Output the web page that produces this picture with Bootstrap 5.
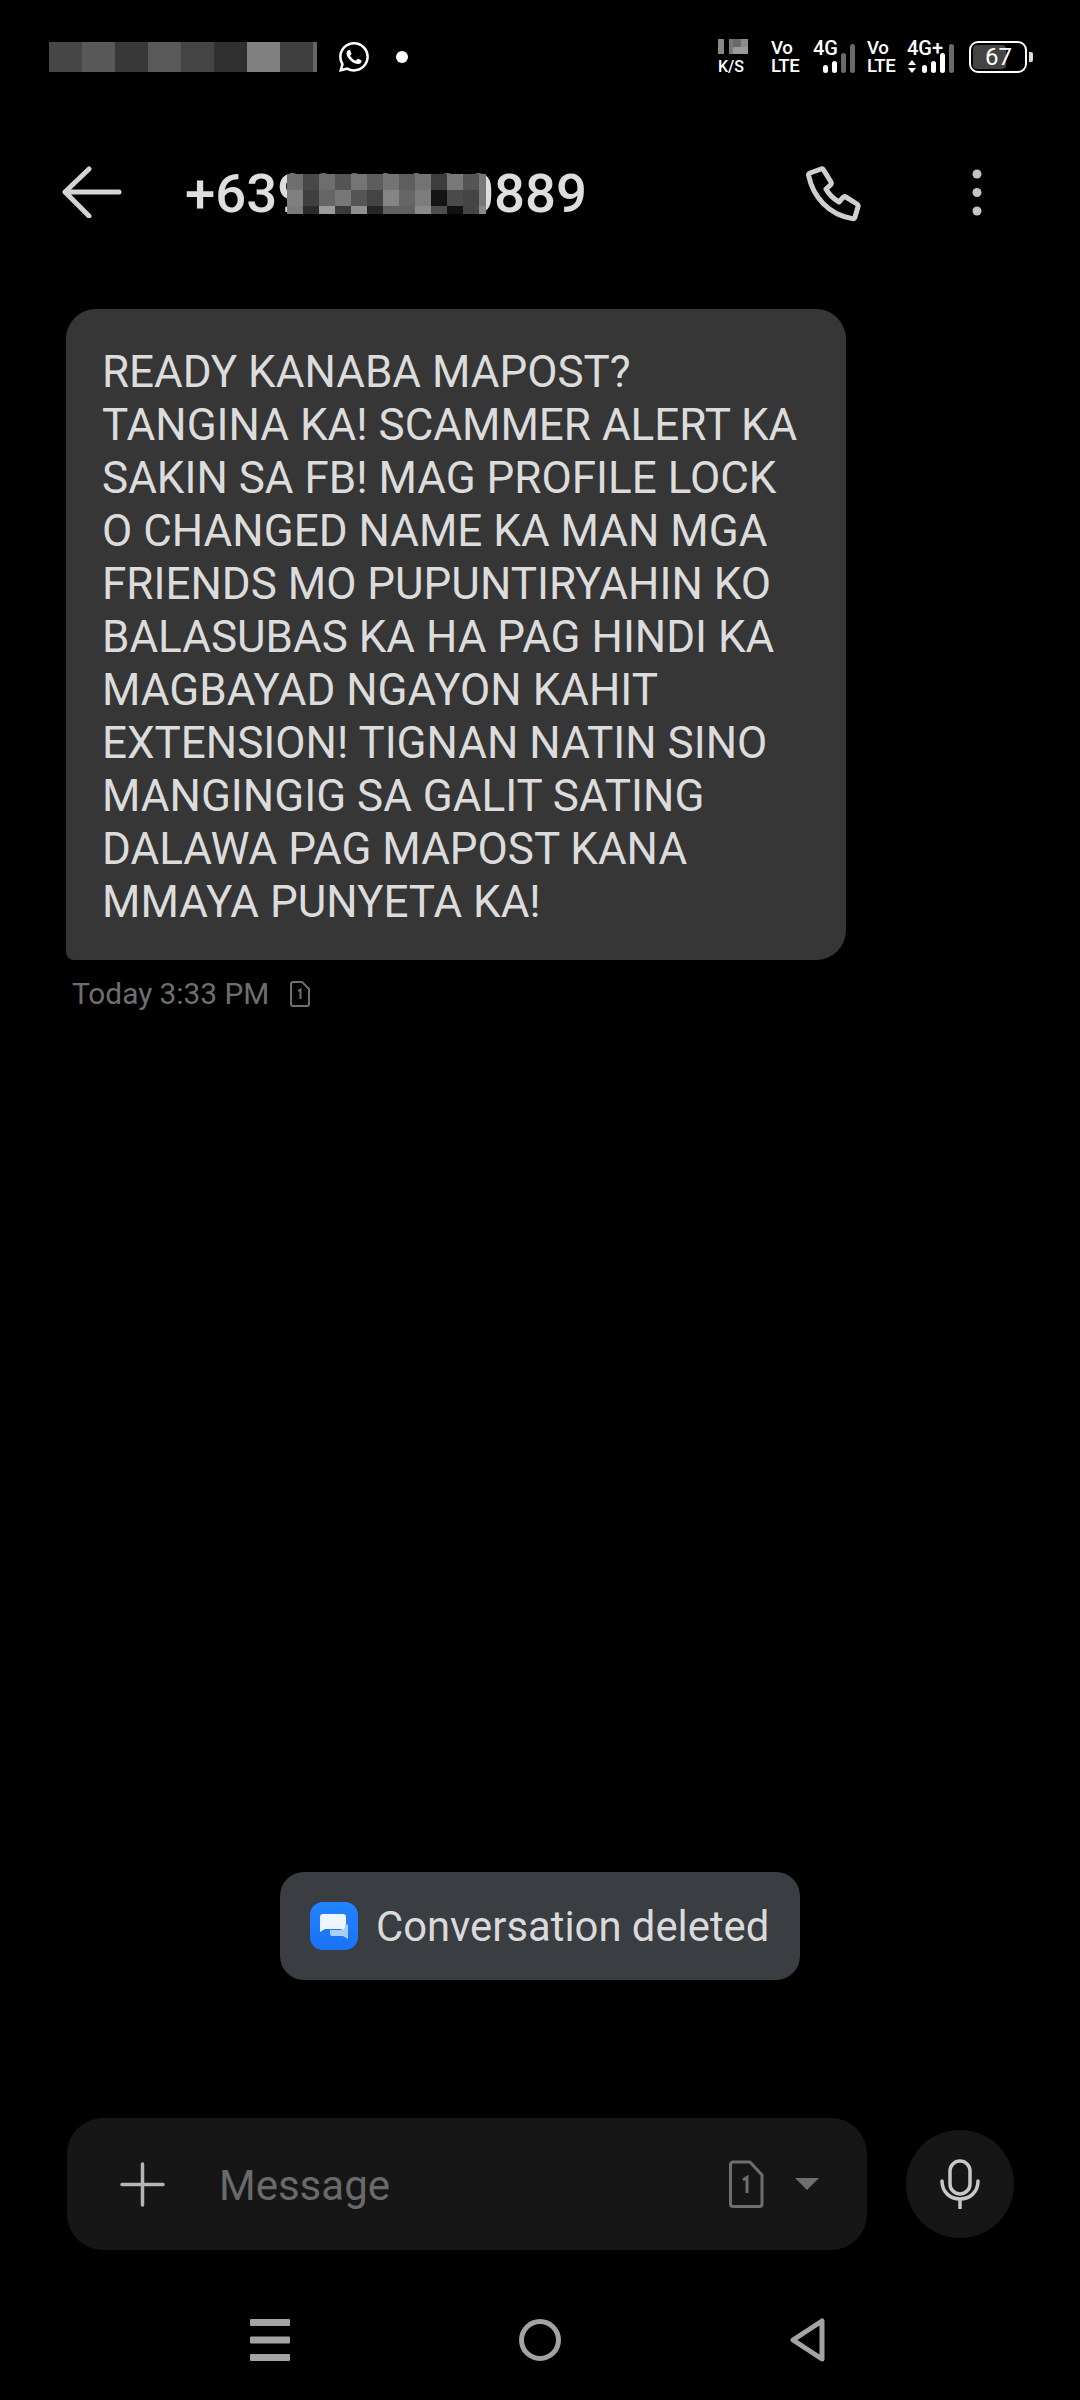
<!DOCTYPE html>
<html lang="en">
<head>
  <meta charset="UTF-8">
  <meta name="viewport" content="width=device-width,initial-scale=1">
  <title>Messages</title>
  <link href="https://cdn.jsdelivr.net/npm/bootstrap@5.3.3/dist/css/bootstrap.min.css" rel="stylesheet">
  <style>
    html, body { background: #000; }
    body { font-family: Roboto, "Liberation Sans", sans-serif; color: #ddd; }
    .phone-page { width: 1080px; height: 2400px; background: #000; }
    svg { display: block; flex: none; }

    .status-row { height: 114px; padding: 0 47px 0 49px; color: #fff; }
    .wa-icon { margin-left: 22px; }
    .dot-icon { margin-left: 27px; }
    .kb-block { width: 30px; }
    .net-kb { font-size: 16px; line-height: 15px; margin-top: 5px; font-weight: 500; }
    .net-stack { font-weight: 500; font-size: 18.7px; line-height: 18px; width: 30px; letter-spacing: -.5px; }
    .net-first { margin-left: 23px; }
    .net-second { margin-left: 12px; }
    .net-gen { font-weight: 500; font-size: 20px; line-height: 18px; white-space: nowrap; }
    .signal-wrap { width: 42px; margin-left: 12px; }
    .signal-wrap-plus { width: 48px; margin-left: 10px; }
    .signal-svg { margin-top: -13px; }
    .battery-group { margin-top: 2px; }
    .battery-box { width: 58px; height: 32px; border: 2.5px solid #fff; border-radius: 9px; padding: 2px; margin-left: 14px; }
    .battery-fill { width: 33px; height: 100%; background: #444; border-radius: 4px; }
    .battery-num { font-size: 24px; line-height: 1; left: 0; right: 0; top: 50%; transform: translateY(-50%); text-align: center; font-weight: 400; padding-left: 1px; }
    .battery-nub { width: 4px; height: 10px; background: #ddd; border-radius: 0 2px 2px 0; margin-left: 2px; }

    .top-row { height: 156px; padding-left: 62px; }
    .contact-name { font-size: 54.5px; font-weight: 500; color: #dedede; line-height: 60px; margin: 2px 0 0 63px; white-space: nowrap; }
    .name-blur { left: 102px; top: 11px; }
    .call-icon { margin: 3px 109px 0 auto; }
    .more-icon { margin-right: 98px; }

    .thread-wrap { padding: 39px 0 0 66px; }
    .sms-bubble { width: 780px; height: 651px; background: #363636; border-radius: 30px 30px 30px 8px; padding: 37px 20px 0 36px; font-size: 44px; line-height: 53px; color: #dcdcdc; white-space: nowrap; }
    .sms-meta { margin: 16px 0 0 6px; font-size: 29.8px; line-height: 36px; color: #6f6f6f; }
    .meta-sim { margin-left: 21px; }

    .toast-chip { width: 520px; height: 108px; background: #3a3d42; border-radius: 24px; padding-left: 30px; margin: 0 0 138px 280px; font-size: 41.8px; color: #dadada; white-space: nowrap; }
    .toast-label { padding-top: 2px; }
    .chip-logo { margin-right: 18px; }

    .composer-row { height: 132px; padding-left: 67px; }
    .composer-box { width: 800px; height: 132px; background: #161616; border-radius: 36px; padding-left: 53px; }
    .composer-hint { margin-left: 54px; padding-top: 2px; font-size: 42px; color: #6a6a6a; }
    .sim-pick { margin-left: auto; padding-right: 48px; gap: 31px; }
    .mic-btn { width: 108px; height: 108px; border-radius: 50%; background: #161616; margin-left: 39px; }

    .nav-row { height: 150px; padding: 30px 6px 0 0; }
    .nav-gap { width: 229px; }
  </style>
</head>
<body>
<div class="phone-page d-flex flex-column overflow-hidden">

  <!-- status bar -->
  <div class="status-row d-flex align-items-center">
    <svg width="268" height="30" viewBox="0 0 268 30" shape-rendering="crispEdges">
      <rect x="0" width="33" height="30" fill="#474747"/>
      <rect x="33" width="33" height="30" fill="#585858"/>
      <rect x="66" width="33" height="30" fill="#383838"/>
      <rect x="99" width="33" height="30" fill="#595959"/>
      <rect x="132" width="33" height="30" fill="#444"/>
      <rect x="165" width="33" height="30" fill="#2f2f2f"/>
      <rect x="198" width="33" height="30" fill="#808080"/>
      <rect x="231" width="33" height="30" fill="#3f3f3f"/>
      <rect x="264" width="4" height="30" fill="#666"/>
    </svg>
    <svg class="wa-icon" width="30" height="30" viewBox="0 0 16 16" fill="#fff"><path d="M13.601 2.326A7.854 7.854 0 0 0 7.994 0C3.627 0 .068 3.558.064 7.926c0 1.399.366 2.76 1.057 3.965L0 16l4.204-1.102a7.933 7.933 0 0 0 3.79.965h.004c4.368 0 7.926-3.558 7.93-7.93A7.898 7.898 0 0 0 13.6 2.326zM7.994 14.521a6.573 6.573 0 0 1-3.356-.92l-.24-.144-2.494.654.666-2.433-.156-.251a6.56 6.56 0 0 1-1.007-3.505c0-3.626 2.957-6.584 6.591-6.584a6.56 6.56 0 0 1 4.66 1.931 6.557 6.557 0 0 1 1.928 4.66c-.004 3.639-2.961 6.592-6.592 6.592zm3.615-4.934c-.197-.099-1.17-.578-1.353-.646-.182-.065-.315-.099-.445.099-.133.197-.513.646-.627.775-.114.133-.232.148-.43.05-.197-.1-.836-.308-1.592-.985-.59-.525-.985-1.175-1.103-1.372-.114-.198-.011-.304.088-.403.087-.088.197-.232.296-.346.1-.114.133-.198.198-.33.065-.134.034-.248-.015-.347-.05-.099-.445-1.076-.612-1.47-.16-.389-.323-.335-.445-.34-.114-.007-.247-.007-.38-.007a.729.729 0 0 0-.529.247c-.182.198-.691.677-.691 1.654 0 .977.71 1.916.81 2.049.098.133 1.394 2.132 3.383 2.992.47.205.84.326 1.129.418.475.152.904.129 1.246.08.38-.058 1.171-.48 1.338-.943.164-.464.164-.86.114-.943-.049-.084-.182-.133-.38-.232z"/></svg>
    <svg class="dot-icon" width="12" height="12" viewBox="0 0 12 12"><circle cx="6" cy="6" r="6" fill="#fff"/></svg>

    <div class="ms-auto d-flex align-items-start">
      <div class="kb-block">
        <svg width="30" height="15" viewBox="0 0 30 15" shape-rendering="crispEdges">
          <rect x="0" width="6" height="15" fill="#888"/><rect x="11" width="4" height="15" fill="#777"/>
          <rect x="15" width="8" height="8" fill="#6a6a6a"/><rect x="23" width="7" height="8" fill="#8c8c8c"/>
          <rect x="15" y="8" width="15" height="7" fill="#9a9a9a"/>
        </svg>
        <div class="net-kb">K/S</div>
      </div>
      <div class="net-stack net-first">Vo<br>LTE</div>
      <div class="signal-wrap">
        <div class="net-gen">4G</div>
        <svg class="signal-svg" width="42" height="30" viewBox="0 0 42 30">
          <rect x="10" y="21" width="5" height="8" rx="2.5" fill="#fff"/>
          <rect x="19" y="17" width="5" height="12" rx="2.5" fill="#fff"/>
          <rect x="28" y="9" width="5" height="20" rx="2.5" fill="#6a6a6a"/>
          <rect x="37" y="0" width="5" height="29" rx="2.5" fill="#6a6a6a"/>
        </svg>
      </div>
      <div class="net-stack net-second">Vo<br>LTE</div>
      <div class="signal-wrap-plus">
        <div class="net-gen">4G+</div>
        <svg class="signal-svg" width="48" height="30" viewBox="0 0 48 30">
          <path d="M5 16l4 5H1zM5 29l-4-5h8z" fill="#fff"/>
          <rect x="15" y="21" width="5" height="8" rx="2.5" fill="#fff"/>
          <rect x="24" y="17" width="5" height="12" rx="2.5" fill="#fff"/>
          <rect x="33" y="9" width="5" height="20" rx="2.5" fill="#fff"/>
          <rect x="42" y="0" width="5" height="29" rx="2.5" fill="#6a6a6a"/>
        </svg>
      </div>
      <div class="battery-group d-flex align-items-center">
        <div class="battery-box position-relative">
          <div class="battery-fill"></div>
          <span class="battery-num position-absolute">67</span>
        </div>
        <div class="battery-nub"></div>
      </div>
    </div>
  </div>

  <!-- contact header -->
  <div class="top-row d-flex align-items-center">
    <svg width="60" height="52" viewBox="0 0 60 52" fill="none" stroke="#d4d4d4" stroke-width="5" stroke-linecap="round" stroke-linejoin="round"><path d="M27 3 3 26l24 24M3 26h54"/></svg>
    <div class="contact-name position-relative">+639000000889
      <svg class="name-blur position-absolute" width="199" height="40" viewBox="0 0 199 40" shape-rendering="crispEdges">
        <rect x="0" y="0" width="16" height="16" fill="#6f6f6f"/><rect x="16" y="0" width="16" height="16" fill="#484848"/><rect x="32" y="0" width="16" height="16" fill="#6e6e6e"/><rect x="48" y="0" width="16" height="16" fill="#555"/><rect x="64" y="0" width="16" height="16" fill="#757575"/><rect x="80" y="0" width="16" height="16" fill="#5d5d5d"/><rect x="96" y="0" width="16" height="16" fill="#747474"/><rect x="112" y="0" width="16" height="16" fill="#5e5e5e"/><rect x="128" y="0" width="16" height="16" fill="#737373"/><rect x="144" y="0" width="16" height="16" fill="#3d3d3d"/><rect x="160" y="0" width="16" height="16" fill="#797979"/><rect x="176" y="0" width="16" height="16" fill="#555"/><rect x="192" y="0" width="7" height="16" fill="#777"/>
        <rect x="0" y="16" width="16" height="16" fill="#808080"/><rect x="16" y="16" width="16" height="16" fill="#3f3f3f"/><rect x="32" y="16" width="16" height="16" fill="#666"/><rect x="48" y="16" width="16" height="16" fill="#777"/><rect x="64" y="16" width="16" height="16" fill="#555"/><rect x="80" y="16" width="16" height="16" fill="#444"/><rect x="96" y="16" width="16" height="16" fill="#858585"/><rect x="112" y="16" width="16" height="16" fill="#666"/><rect x="128" y="16" width="16" height="16" fill="#7d7d7d"/><rect x="144" y="16" width="16" height="16" fill="#151515"/><rect x="160" y="16" width="16" height="16" fill="#4a4a4a"/><rect x="176" y="16" width="16" height="16" fill="#444"/><rect x="192" y="16" width="7" height="16" fill="#777"/>
        <rect x="0" y="32" width="16" height="8" fill="#7a7a7a"/><rect x="16" y="32" width="16" height="8" fill="#2a2a2a"/><rect x="32" y="32" width="16" height="8" fill="#9a9a9a"/><rect x="48" y="32" width="16" height="8" fill="#3a3a3a"/><rect x="64" y="32" width="16" height="8" fill="#8f8f8f"/><rect x="80" y="32" width="16" height="8" fill="#252525"/><rect x="96" y="32" width="32" height="8" fill="#606060"/><rect x="128" y="32" width="16" height="8" fill="#8a8a8a"/><rect x="144" y="32" width="16" height="8" fill="#4d4d4d"/><rect x="160" y="32" width="16" height="8" fill="#111"/><rect x="176" y="32" width="16" height="8" fill="#444"/><rect x="192" y="32" width="7" height="8" fill="#888"/>
      </svg>
    </div>
    <svg class="call-icon" width="57" height="57" viewBox="0 0 57 57" fill="none" stroke="#cfcfcf" stroke-width="5" stroke-linejoin="round"><path d="M4 8 15 4c1-.4 2 0 2.600 1L25 17c.5 1 .4 2-.4 2.800L20 24c3 5.500 7 9.500 13 13l4-4.600c.8-.8 1.800-1 2.800-.4L51 39c1 .6 1.400 1.600 1 2.700L49 52c-.4 1.200-1.400 1.800-2.600 1.600C23 50 7 32 2.600 10.600 2.400 9.400 3 8.400 4 8Z"/></svg>
    <svg class="more-icon" width="10" height="47" viewBox="0 0 10 47" fill="#c4c4c4"><circle cx="5" cy="5" r="4.500"/><circle cx="5" cy="23.500" r="4.500"/><circle cx="5" cy="42" r="4.500"/></svg>
  </div>

  <!-- thread -->
  <div class="thread-wrap flex-grow-1">
    <div class="sms-bubble">READY KANABA MAPOST?<br>TANGINA KA! SCAMMER ALERT KA<br>SAKIN SA FB! MAG PROFILE LOCK<br>O CHANGED NAME KA MAN MGA<br>FRIENDS MO PUPUNTIRYAHIN KO<br>BALASUBAS KA HA PAG HINDI KA<br>MAGBAYAD NGAYON KAHIT<br>EXTENSION! TIGNAN NATIN SINO<br>MANGINGIG SA GALIT SATING<br>DALAWA PAG MAPOST KANA<br>MMAYA PUNYETA KA!</div>
    <div class="sms-meta d-flex align-items-center">
      <span>Today 3:33 PM</span>
      <svg class="meta-sim" width="20" height="26" viewBox="0 0 20 26" fill="none" stroke="#6f6f6f" stroke-width="2"><path d="M3 1h9l7 7v15a2 2 0 0 1-2 2H3a2 2 0 0 1-2-2V3a2 2 0 0 1 2-2Z" stroke-linejoin="round"/><path d="M8 10l2.500-1.500V18" stroke-width="2"/></svg>
    </div>
  </div>

  <!-- toast -->
  <div class="toast-chip d-flex align-items-center">
    <svg class="chip-logo" width="48" height="48" viewBox="0 0 48 48">
      <defs><linearGradient id="chipBlue" x1="0" y1="0" x2="0" y2="1"><stop offset="0" stop-color="#2184ff"/><stop offset="1" stop-color="#1a72f5"/></linearGradient></defs>
      <rect width="48" height="48" rx="13" fill="url(#chipBlue)"/>
      <path d="M13 12h20a3 3 0 0 1 3 3v15l-5-3H15l-5 3V15a3 3 0 0 1 3-3Z" fill="#eef5ff"/>
      <path d="M35 22h1a2 2 0 0 1 2 2v13l-5-3H22a2 2 0 0 1-2-2v-4h11a4 4 0 0 0 4-4Z" fill="#a9cdfb"/>
    </svg>
    <span class="toast-label">Conversation deleted</span>
  </div>

  <!-- composer -->
  <div class="composer-row d-flex align-items-center">
    <div class="composer-box d-flex align-items-center">
      <svg width="45" height="45" viewBox="0 0 45 45" stroke="#b5b5b5" stroke-width="3.500" stroke-linecap="round"><path d="M22.500 2v41M2 22.500h41"/></svg>
      <span class="composer-hint">Message</span>
      <div class="sim-pick d-flex align-items-center">
        <svg width="36" height="48" viewBox="0 0 36 48" fill="none" stroke="#6e6e6e" stroke-width="3"><path d="M5 2h17l12 13v29a2.500 2.500 0 0 1-2.500 2.500H5A2.500 2.500 0 0 1 2.500 44V4.500A2.500 2.500 0 0 1 5 2Z" stroke-linejoin="round"/><path d="M15 20l4-2.500V33" stroke-width="3"/></svg>
        <svg width="24" height="12" viewBox="0 0 24 12"><path d="M0 0h24L12 12Z" fill="#6e6e6e"/></svg>
      </div>
    </div>
    <div class="mic-btn d-flex align-items-center justify-content-center">
      <svg width="40" height="50" viewBox="0 0 40 50" fill="none" stroke="#c8c8c8" stroke-width="3.500" stroke-linecap="round"><rect x="10" y="2" width="20" height="33" rx="10"/><path d="M2 22c0 11 8 18 18 18s18-7 18-18M20 40v9"/></svg>
    </div>
  </div>

  <!-- nav bar -->
  <div class="nav-row d-flex align-items-center justify-content-center">
    <svg width="40" height="42" viewBox="0 0 40 42" fill="#a3a3a3"><rect width="40" height="7" rx="1"/><rect y="17.500" width="40" height="7" rx="1"/><rect y="35" width="40" height="7" rx="1"/></svg>
    <div class="nav-gap"></div>
    <svg width="42" height="42" viewBox="0 0 42 42" fill="none" stroke="#a3a3a3" stroke-width="5"><circle cx="21" cy="21" r="18.500"/></svg>
    <div class="nav-gap"></div>
    <svg width="35" height="44" viewBox="0 0 35 44" fill="none" stroke="#a3a3a3" stroke-width="5" stroke-linejoin="round"><path d="M32 3v38L3 22Z"/></svg>
  </div>
</div>
<script src="https://cdn.jsdelivr.net/npm/bootstrap@5.3.3/dist/js/bootstrap.bundle.min.js"></script>
</body>
</html>
